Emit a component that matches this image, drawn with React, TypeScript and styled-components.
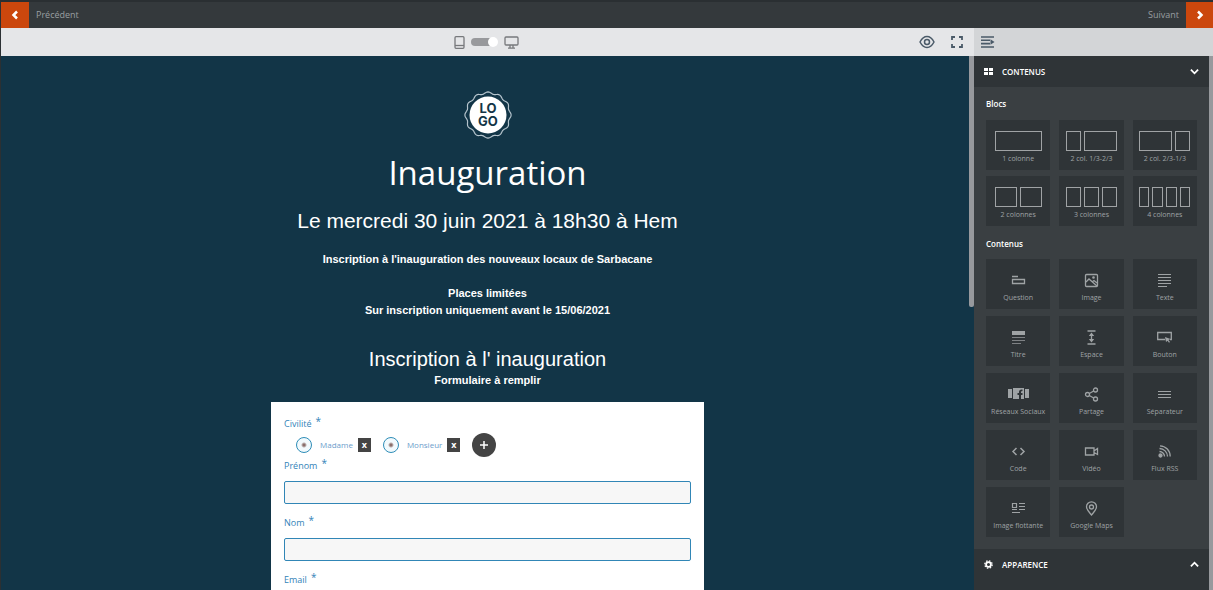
import React from 'react';
import styled, { createGlobalStyle } from 'styled-components';

const GlobalStyle = createGlobalStyle`
  *, *::before, *::after { box-sizing: border-box; }
  body {
    margin: 0;
    background: #123547;
    font-family: "Open Sans", "Noto Sans", sans-serif;
    -webkit-font-smoothing: antialiased;
  }
  h1, h2, h3, p { margin: 0; font-weight: 400; }
  button { font: inherit; border: 0; padding: 0; background: none; cursor: pointer; }
  svg { display: block; flex: none; }
`;

const Page = styled.div`
  display: flex;
  flex-direction: column;
  height: 100vh;
  overflow: hidden;
  border-left: 1px solid #2b3033;
`;

const TopBar = styled.header`
  flex: none;
  display: flex;
  justify-content: space-between;
  height: 28px;
  border-top: 2px solid #2a2f32;
  background: #34393c;
`;

const StepButton = styled.button`
  display: flex;
  align-items: center;
  gap: 7px;
  color: #9a9fa1;
  font-size: 9px;
  line-height: 12px;
`;

const StepArrow = styled.span<{ $end?: boolean }>`
  display: flex;
  align-items: center;
  justify-content: center;
  width: ${(p) => (p.$end ? 27 : 28)}px;
  height: 26px;
  background: #cb470d;
`;

const Workspace = styled.div`
  flex: 1;
  display: flex;
  min-height: 0;
`;

const Editor = styled.main`
  position: relative;
  flex: 1;
  display: flex;
  flex-direction: column;
  min-width: 0;
`;

const Toolbar = styled.div`
  flex: none;
  display: grid;
  grid-template-columns: 1fr auto 1fr;
  align-items: center;
  height: 28px;
  padding-right: 10px;
  background: #e5e6e8;
`;

const DeviceSwitch = styled.div`
  grid-column: 2;
  display: flex;
  align-items: center;
  gap: 6px;
  padding-left: 7px;
`;

const Toggle = styled.input`
  appearance: none;
  display: flex;
  align-items: center;
  justify-content: flex-end;
  width: 27px;
  height: 8px;
  margin: 0;
  border-radius: 4px;
  background: linear-gradient(to right, #98999c 22px, transparent 22px);
  &::after {
    content: "";
    flex: none;
    width: 10px;
    height: 10px;
    border-radius: 50%;
    background: #fff;
  }
`;

const ViewTools = styled.div`
  display: flex;
  align-items: center;
  justify-content: flex-end;
  gap: 15px;
`;

const Canvas = styled.div`
  flex: 1;
  display: flex;
  flex-direction: column;
  align-items: center;
  min-height: 0;
  overflow: hidden;
  padding-top: 35px;
  background: #123547;
  color: #fff;
  text-align: center;
  font-family: "Liberation Sans", Arial, sans-serif;
`;

const ScrollThumb = styled.div`
  position: absolute;
  top: 28px;
  right: 0;
  width: 5px;
  height: 251px;
  border-radius: 0 0 2px 2px;
  background: #97999d;
`;

const Title = styled.h1`
  margin-top: 11px;
  font-family: "Open Sans", sans-serif;
  font-size: 33px;
  line-height: 46px;
`;

const Heading = styled.h2<{ $size: number; $gap: number }>`
  margin-top: ${(p) => p.$gap}px;
  font-size: ${(p) => p.$size}px;
  line-height: 26px;
`;

const Copy = styled.p<{ $gap?: number }>`
  margin-top: ${(p) => p.$gap ?? 0}px;
  font-size: 11px;
  font-weight: 700;
  line-height: 17px;
`;

const FormCard = styled.form`
  flex: none;
  width: 100%;
  max-width: 433px;
  margin-top: 13px;
  padding: 13px;
  background: #fff;
  color: #3383b8;
  text-align: left;
  font-family: "Open Sans", sans-serif;
`;

const Field = styled.div`
  display: flex;
  flex-direction: column;
  gap: 6px;
  margin-bottom: 10px;
`;

const FieldLabel = styled.label`
  display: flex;
  gap: 4px;
  font-size: 9px;
  line-height: 18px;
`;

const Star = styled.span`
  font-size: 10px;
  line-height: 13px;
`;

const ChoiceGroup = styled.fieldset`
  margin: 0;
  padding: 0;
  border: 0;
`;

const ChoiceLegend = styled.legend`
  display: flex;
  gap: 4px;
  padding: 0;
  font-size: 9px;
  line-height: 18px;
`;

const ChoiceRow = styled.div`
  display: flex;
  align-items: center;
  height: 24px;
  padding-left: 12px;
`;

const Choice = styled.label`
  display: flex;
  align-items: center;
  gap: 8px;
  color: #6d9dcb;
  font-size: 8px;
  line-height: 16px;
`;

const Radio = styled.input`
  appearance: none;
  width: 16px;
  height: 16px;
  margin: 0;
  border: 1px solid #2e8db8;
  border-radius: 8px;
  background: radial-gradient(circle, #8b6f6b 1px, #f2fafd 3px);
`;

const RemoveButton = styled.button`
  width: 13px;
  height: 14px;
  margin: 0 12px 0 5px;
  background: #444;
  color: #fff;
  font-size: 9px;
  font-weight: 700;
  line-height: 12px;
`;

const AddButton = styled.button`
  display: flex;
  align-items: center;
  justify-content: center;
  width: 24px;
  height: 24px;
  border-radius: 50%;
  background: #444;
`;

const TextInput = styled.input`
  width: 100%;
  height: 23px;
  padding: 0 6px;
  border: 1px solid #3186b6;
  border-radius: 2px;
  background: #f7f7f7;
  font: inherit;
`;

const Sidebar = styled.aside`
  flex: none;
  display: flex;
  flex-direction: column;
  width: 239px;
  background: #3a3f42;
`;

const SidebarBar = styled.div`
  flex: none;
  display: flex;
  align-items: center;
  height: 28px;
  padding-left: 7px;
  background: #d3d5d7;
`;

const SidebarBody = styled.div`
  flex: 1;
  display: flex;
  flex-direction: column;
  min-height: 0;
  overflow: hidden;
  border-right: 4px solid #97999d;
`;

const SectionHeader = styled.button`
  flex: none;
  display: grid;
  grid-template-columns: 9px 1fr 9px;
  align-items: center;
  gap: 9px;
  height: 31px;
  padding: 0 10px;
  background: #2f3437;
  color: #fff;
  font-size: 8px;
  font-weight: 600;
  line-height: 12px;
  text-align: left;
`;

const SectionBody = styled.div`
  flex: none;
  padding: 10px 12px 12px;
`;

const GroupTitle = styled.h3`
  color: #fff;
  font-size: 8px;
  font-weight: 600;
  line-height: 14px;
`;

const TileGrid = styled.div<{ $gap: number }>`
  display: grid;
  grid-template-columns: repeat(3, 1fr);
  gap: ${(p) => p.$gap}px 9px;
  margin: 9px 0 11px;
  &:last-child { margin: 8px 0 0; }
`;

const Tile = styled.button`
  display: flex;
  flex-direction: column;
  align-items: center;
  height: 50px;
  padding-top: 11px;
  background: #2f3437;
  color: #9fa3a5;
  font-size: 7px;
  line-height: 10px;
  white-space: nowrap;
`;

const TileIcon = styled.span`
  display: flex;
  align-items: center;
  justify-content: center;
  gap: 3px;
  height: 20px;
  margin-bottom: 3px;
`;

const ColumnShape = styled.span<{ $width: number }>`
  width: ${(p) => p.$width}px;
  height: 20px;
  border: 1px solid #a0a3a5;
`;

const AppearanceBody = styled.div`
  flex: 1;
  background: #2f3437;
`;

const Chevron = ({ d, size = 10, width = 2 }: { d: string; size?: number; width?: number }) => (
  <svg width={size} height={size} viewBox="0 0 10 10" fill="none" stroke="#fff" strokeWidth={width}>
    <path d={d} />
  </svg>
);

const LogoBadge = () => {
  const points = Array.from({ length: 144 }, (_, i) => {
    const a = (i / 144) * Math.PI * 2;
    const r = 22.2 + 0.9 * Math.cos(a * 12);
    return `${(24 + r * Math.sin(a)).toFixed(2)},${(24 - r * Math.cos(a)).toFixed(2)}`;
  }).join(' ');
  return (
    <svg width="48" height="48" viewBox="0 0 48 48" role="img" aria-label="Logo">
      <polygon points={points} fill="none" stroke="#b4c3cc" strokeWidth="1.200" />
      <circle cx="24" cy="24" r="18.500" fill="#fff" />
      <g fill="#123547" fontFamily="Inter, sans-serif" fontWeight="700" fontSize="13" textAnchor="middle">
        <text x="24" y="22">LO</text>
        <text x="24" y="35">GO</text>
      </g>
    </svg>
  );
};

const icons: Record<string, React.ReactNode> = {
  Question: <path d="M1 3.500h6M1.500 6.500h12v4h-12z" />,
  Image: (
    <>
      <rect x="1.500" y="1.500" width="12" height="12" rx="1" />
      <path d="M2 9l3-3 4 3.500 4 3.500M8 9l2-1.500 3 2.500" />
      <circle cx="9.500" cy="4.500" r="0.700" />
    </>
  ),
  Texte: <path d="M1 1.500h13M1 4.500h13M1 7.500h13M1 10.500h13M1 13.500h9" strokeWidth="1.200" />,
  Titre: (
    <>
      <path d="M1 1h13v4H1z" fill="currentColor" stroke="none" />
      <path d="M1 7.500h13M1 10.500h13M1 13.500h9" strokeWidth="1" opacity="0.700" />
    </>
  ),
  Espace: (
    <>
      <path d="M3.500 1h8M3.500 14h8M7.500 4v7" />
      <path d="M4.800 6L7.500 2.500L10.200 6zM4.800 9L7.500 12.500L10.200 9z" fill="currentColor" stroke="none" />
    </>
  ),
  Bouton: (
    <>
      <path d="M8 9.500H.7v-7h13.600v7H13" />
      <path d="M8 7l5.500 2-2 1 1.500 2-1 .8-1.500-2L9 12z" fill="currentColor" stroke="none" />
    </>
  ),
  Partage: (
    <>
      <circle cx="3.500" cy="7.500" r="2" />
      <circle cx="11.500" cy="3" r="2" />
      <circle cx="11.500" cy="12" r="2" />
      <path d="M5.300 6.500l4.400-2.500M5.300 8.500l4.400 2.500" />
    </>
  ),
  'Séparateur': <path d="M1 4.500h13M1 7.500h13M1 10.500h13" strokeWidth="1" />,
  Code: <path d="M5.500 4L2 7.500 5.500 11M9.500 4L13 7.500 9.500 11" strokeWidth="1.500" />,
  'Vidéo': <path d="M1.500 4h8.500v7H1.500zM10 7l3.500-2.500v6L10 8.500" />,
  'Flux RSS': (
    <>
      <circle cx="3.500" cy="11.500" r="1.500" fill="currentColor" />
      <path d="M2.500 7.500a5 5 0 0 1 5 5M2.500 4.500a8 8 0 0 1 8 8M3 1.800a10.500 10.500 0 0 1 10.200 10.700" />
    </>
  ),
  'Image flottante': <path d="M1.500 2.500h4v4h-4zM8 2.500h6M8 5.500h6M8 8.500h6M1 8.500h5M1 11.500h8" strokeWidth="1.200" />,
  'Google Maps': (
    <>
      <path d="M7.500 14C4.500 10.500 2.500 8.500 2.500 5.800a5 5 0 0 1 10 0C12.500 8.500 10.500 10.500 7.500 14z" />
      <circle cx="7.500" cy="6" r="2" />
    </>
  ),
};

const SocialIcon = () => (
  <svg width="21" height="12" viewBox="0 0 21 12" fill="currentColor">
    <path d="M0 1h4v9H0zM17 1h4v9h-4z" />
    <path d="M5 0h11v11h-3V7h1.500V5H13V4q0-1 1.500-1V1.500Q11 1 11 4v1H9.500v2H11v4H5z" />
  </svg>
);

const ContentIcon = ({ name }: { name: string }) =>
  name === 'Réseaux Sociaux' ? (
    <SocialIcon />
  ) : (
    <svg width="15" height="15" viewBox="0 0 15 15" fill="none" stroke="currentColor" strokeWidth="1.300">
      {icons[name]}
    </svg>
  );

const blocks: { label: string; columns: number[] }[] = [
  { label: '1 colonne', columns: [47] },
  { label: '2 col. 1/3-2/3', columns: [15, 33] },
  { label: '2 col. 2/3-1/3', columns: [33, 15] },
  { label: '2 colonnes', columns: [22, 22] },
  { label: '3 colonnes', columns: [15, 15, 15] },
  { label: '4 colonnes', columns: [10, 11, 11, 10] },
];

const contents = [
  'Question', 'Image', 'Texte', 'Titre', 'Espace', 'Bouton', 'Réseaux Sociaux',
  'Partage', 'Séparateur', 'Code', 'Vidéo', 'Flux RSS', 'Image flottante', 'Google Maps',
];

const TextField = ({ id, label }: { id: string; label: string }) => (
  <Field>
    <FieldLabel htmlFor={id}>{label} <Star>*</Star></FieldLabel>
    <TextInput id={id} type="text" />
  </Field>
);

export default function App() {
  return (
    <>
      <GlobalStyle />
      <Page>
        <TopBar>
          <StepButton>
            <StepArrow><Chevron d="M7 1.500L3.500 5 7 8.500" width={2.5} /></StepArrow>
            Précédent
          </StepButton>
          <StepButton>
            Suivant
            <StepArrow $end><Chevron d="M3 1.500L6.500 5 3 8.500" width={2.5} /></StepArrow>
          </StepButton>
        </TopBar>
        <Workspace>
          <Editor>
            <Toolbar>
              <DeviceSwitch>
                <svg width="11" height="13" viewBox="0 0 11 13" fill="none" stroke="#77797c" strokeWidth="1.300">
                  <rect x="1" y="0.700" width="9" height="11.600" rx="1" />
                  <path d="M1 9.500h9" />
                </svg>
                <Toggle type="checkbox" role="switch" aria-label="Affichage ordinateur" defaultChecked />
                <svg width="15" height="13" viewBox="0 0 15 13" fill="none" stroke="#77797c" strokeWidth="1.300">
                  <rect x="1" y="1" width="13" height="8" rx="1" />
                  <path d="M6 9v3M9 9v3M4 12.200h7" />
                </svg>
              </DeviceSwitch>
              <ViewTools>
                <button aria-label="Aperçu">
                  <svg width="16" height="14" viewBox="0 0 16 14" fill="none" stroke="#4a5a68" strokeWidth="1.500">
                    <path d="M1 7C3 3.200 5.300 1.500 8 1.500S13 3.200 15 7c-2 3.800-4.300 5.500-7 5.500S3 10.800 1 7z" />
                    <circle cx="8" cy="7" r="2.500" />
                  </svg>
                </button>
                <button aria-label="Plein écran">
                  <svg width="14" height="14" viewBox="0 0 14 14" fill="none" stroke="#4a5a68" strokeWidth="1.800">
                    <path d="M2 5V2h3M9 2h3v3M12 9v3H9M5 12H2V9" />
                  </svg>
                </button>
              </ViewTools>
            </Toolbar>
            <Canvas>
              <LogoBadge />
              <Title>Inauguration</Title>
              <Heading $size={21} $gap={12}>Le mercredi 30 juin 2021 à 18h30 à Hem</Heading>
              <Copy $gap={17}>Inscription à l'inauguration des nouveaux locaux de Sarbacane</Copy>
              <Copy $gap={17}>Places limitées<br />Sur inscription uniquement avant le 15/06/2021</Copy>
              <Heading $size={20} $gap={27}>Inscription à l' inauguration</Heading>
              <Copy>Formulaire à remplir</Copy>
              <FormCard>
                <ChoiceGroup>
                  <ChoiceLegend>Civilité <Star>*</Star></ChoiceLegend>
                  <ChoiceRow>
                    <Choice><Radio type="radio" name="civilite" />Madame</Choice>
                    <RemoveButton type="button" aria-label="Supprimer Madame">x</RemoveButton>
                    <Choice><Radio type="radio" name="civilite" />Monsieur</Choice>
                    <RemoveButton type="button" aria-label="Supprimer Monsieur">x</RemoveButton>
                    <AddButton type="button" aria-label="Ajouter un choix">
                      <Chevron d="M5 1v8M1 5h8" width={1.5} />
                    </AddButton>
                  </ChoiceRow>
                </ChoiceGroup>
                <TextField id="prenom" label="Prénom" />
                <TextField id="nom" label="Nom" />
                <TextField id="email" label="Email" />
              </FormCard>
            </Canvas>
            <ScrollThumb />
          </Editor>
          <Sidebar>
            <SidebarBar>
              <button aria-label="Replier le panneau">
                <svg width="14" height="12" viewBox="0 0 14 12" stroke="#4a5a68" strokeWidth="1.600">
                  <path d="M0 1h13M0 4.300h9M0 7.600h9M0 11h13" />
                  <path d="M9.500 3.300L13.500 6 9.500 8.700z" fill="#4a5a68" stroke="none" />
                </svg>
              </button>
            </SidebarBar>
            <SidebarBody>
              <SectionHeader aria-expanded="true">
                <svg width="9" height="7" viewBox="0 0 9 7" fill="#fff">
                  <path d="M0 0h4v3H0zM5 0h4v3H5zM0 4h4v3H0zM5 4h4v3H5z" />
                </svg>
                CONTENUS
                <Chevron size={9} d="M1 3l4 4 4-4" />
              </SectionHeader>
              <SectionBody>
                <GroupTitle>Blocs</GroupTitle>
                <TileGrid $gap={6}>
                  {blocks.map((b) => (
                    <Tile key={b.label}>
                      <TileIcon>{b.columns.map((w, i) => <ColumnShape key={i} $width={w} />)}</TileIcon>
                      {b.label}
                    </Tile>
                  ))}
                </TileGrid>
                <GroupTitle>Contenus</GroupTitle>
                <TileGrid $gap={7}>
                  {contents.map((name) => (
                    <Tile key={name}>
                      <TileIcon><ContentIcon name={name} /></TileIcon>
                      {name}
                    </Tile>
                  ))}
                </TileGrid>
              </SectionBody>
              <SectionHeader aria-expanded="false">
                <svg width="9" height="9" viewBox="0 0 9 9" fill="none" stroke="#fff">
                  <circle cx="4.500" cy="4.500" r="2.400" strokeWidth="1.800" />
                  <circle cx="4.500" cy="4.500" r="3.700" strokeWidth="1.300" strokeDasharray="1.500 1.406" />
                </svg>
                APPARENCE
                <Chevron size={9} d="M1 7l4-4 4 4" />
              </SectionHeader>
              <AppearanceBody />
            </SidebarBody>
          </Sidebar>
        </Workspace>
      </Page>
    </>
  );
}
